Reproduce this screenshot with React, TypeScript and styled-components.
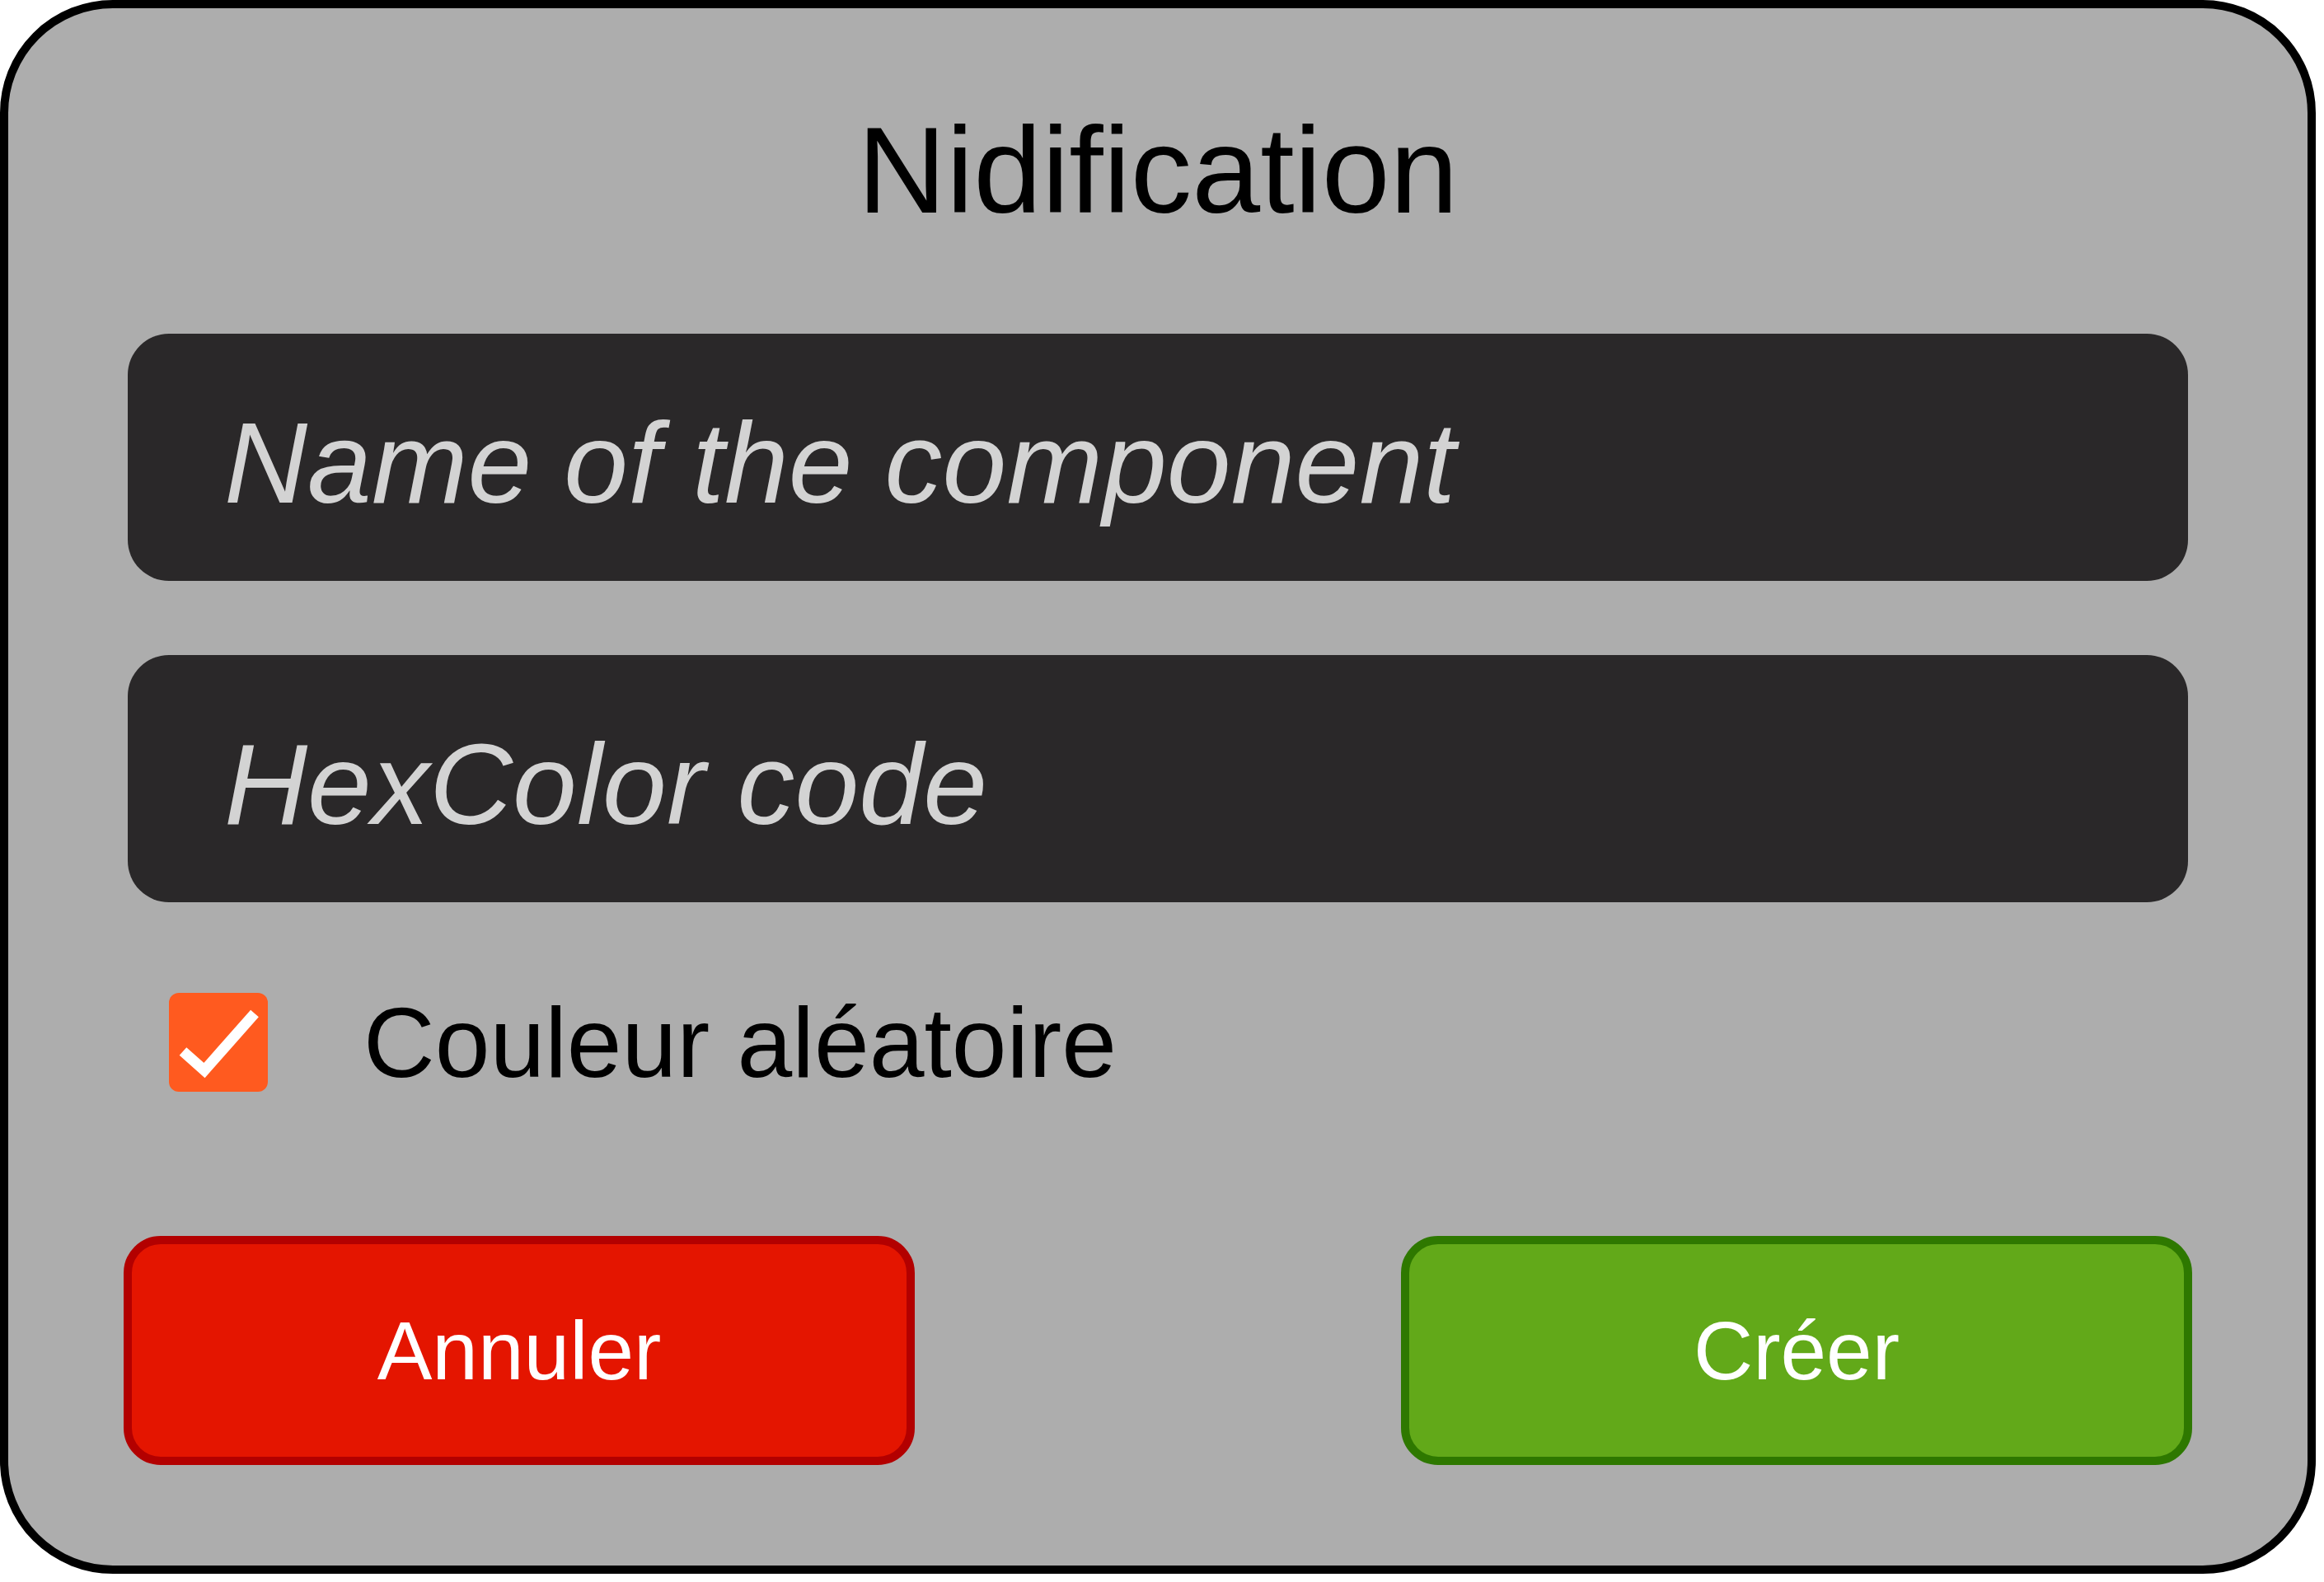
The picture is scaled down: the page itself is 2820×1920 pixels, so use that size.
import React from "react";
import styled, { createGlobalStyle } from "styled-components";

const GlobalStyle = createGlobalStyle`
  html, body {
    margin: 0;
    padding: 0;
    background: #ffffff;
  }
  * {
    box-sizing: border-box;
  }
`;

const Panel = styled.div`
  width: 2810px;
  height: 1910px;
  background: #adadad;
  border: 10px solid #000000;
  border-radius: 137px;
  padding: 122px 140px 0 140px;
  display: flex;
  flex-direction: column;
  font-family: "Liberation Sans", Arial, sans-serif;
`;

const Title = styled.h1`
  margin: 0;
  font-size: 149px;
  line-height: 150px;
  font-weight: 400;
  text-align: center;
  color: #000000;
`;

const Fields = styled.div`
  display: flex;
  flex-direction: column;
  gap: 90px;
  margin: 123px 5px 0 5px;
`;

const TextField = styled.input`
  width: 100%;
  height: 300px;
  border: none;
  outline: none;
  border-radius: 50px;
  background: #2a2829;
  padding: 14px 40px 0 117px;
  font-family: "Liberation Sans", Arial, sans-serif;
  font-size: 140px;
  font-style: italic;
  color: #d3d3d3;
  &::placeholder {
    color: #d3d3d3;
    opacity: 1;
  }
`;

const CheckRow = styled.label`
  display: flex;
  align-items: center;
  gap: 116px;
  height: 120px;
  margin: 110px 0 0 55px;
  cursor: pointer;
`;

const CheckBox = styled.span`
  display: flex;
  align-items: center;
  justify-content: center;
  width: 120px;
  height: 120px;
  border-radius: 12px;
  background: #ff5a1f;
  flex: none;
`;

const CheckLabel = styled.span`
  font-size: 120px;
  line-height: 120px;
  color: #000000;
`;

const Actions = styled.div`
  display: flex;
  justify-content: space-between;
  margin-top: 175px;
`;

const ActionButton = styled.button<{ $variant: "cancel" | "create" }>`
  width: 960px;
  height: 278px;
  border-radius: 45px;
  border: 10px solid ${(p) => (p.$variant === "cancel" ? "#b30000" : "#2e7800")};
  background: ${(p) => (p.$variant === "cancel" ? "#e41500" : "#62a919")};
  color: #ffffff;
  font-family: "Liberation Sans", Arial, sans-serif;
  font-size: 100px;
  line-height: 1;
  padding: 0;
  cursor: pointer;
`;

export default function App() {
  return (
    <>
      <GlobalStyle />
      <Panel>
        <Title>Nidification</Title>
        <Fields>
          <TextField placeholder="Name of the component" />
          <TextField placeholder="HexColor code" />
        </Fields>
        <CheckRow>
          <CheckBox>
            <svg width="120" height="120" viewBox="0 0 120 120">
              <polyline
                points="17,71 43,94 104,25"
                fill="none"
                stroke="#ffffff"
                strokeWidth="13"
                strokeLinejoin="miter"
                strokeLinecap="butt"
              />
            </svg>
          </CheckBox>
          <CheckLabel>Couleur aléatoire</CheckLabel>
        </CheckRow>
        <Actions>
          <ActionButton $variant="cancel">Annuler</ActionButton>
          <ActionButton $variant="create">Créer</ActionButton>
        </Actions>
      </Panel>
    </>
  );
}
